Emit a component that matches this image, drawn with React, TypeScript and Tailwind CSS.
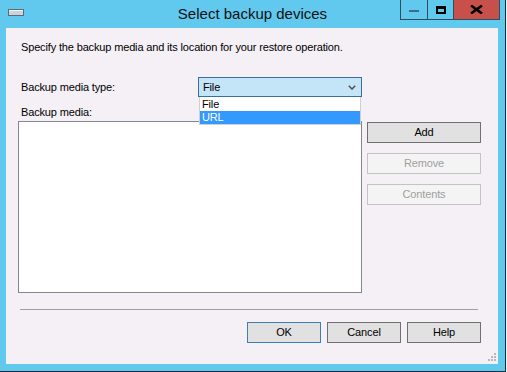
import { type ReactNode } from 'react';

function WinButton({ children, variant = 'normal' }: { children: ReactNode; variant?: 'normal' | 'default' | 'disabled' }) {
  const styles =
    variant === 'disabled'
      ? 'border-[#c3c3c3] bg-[#f4f4f4] text-[#a0a0a0]'
      : variant === 'default'
        ? 'border-[#3c7fb1] bg-[#e1e1e1] text-black'
        : 'border-[#707070] bg-[#e1e1e1] text-black';
  return <div className={`flex h-[21px] items-center justify-center border text-[11px] leading-[13px] ${styles}`}>{children}</div>;
}

function TitleBar() {
  return (
    <div className="grid h-[28px] grid-cols-[1fr_auto_1fr]">
      <div className="pl-[8px] pt-[9px]">
        <svg width="16" height="7" viewBox="0 0 16 7" aria-hidden="true">
          <rect x="0.5" y="0.5" width="15" height="6" fill="#c9d3dd" stroke="#5a6b7c" />
          <rect x="1" y="1" width="14" height="1" fill="#f4f6f8" />
          <rect x="2" y="3" width="1" height="1" fill="#f2e6a0" />
          <rect x="4" y="3" width="1" height="1" fill="#f2e6a0" />
        </svg>
      </div>
      <div className="pt-[5px] text-[15px] leading-[18px] text-[#111]">Select backup devices</div>
      <div className="flex justify-end pr-[5px]">
        <div className="flex h-[20px] w-[100px] border-x border-b border-[#2f4d5c]">
          <div className="flex w-[26px] items-center justify-center">
            <div className="mt-[3px] h-[2px] w-[10px] bg-[#3b6f86]" />
          </div>
          <div className="flex w-[26px] items-center justify-center border-l border-[#2f4d5c]">
            <div className="h-[8px] w-[10px] border-2 border-t-[3px] border-black" />
          </div>
          <div className="flex flex-1 items-center justify-center border-l border-[#2f4d5c] bg-[#c7504b]">
            <svg width="13" height="9" viewBox="0 0 13 9" aria-hidden="true">
              <path d="M1 0.5 L12 8.5 M12 0.5 L1 8.5" stroke="#000" strokeWidth="2.6" />
            </svg>
          </div>
        </div>
      </div>
    </div>
  );
}

function ComboBox() {
  return (
    <div className="relative h-[20px] w-[164px]">
      <div className="flex h-full items-center justify-between border border-[#3c6f9a] bg-[#c4e5f7] pl-[4px] pr-[5px] text-[11px] leading-[13px] text-black">
        <span>File</span>
        <svg width="8" height="5" viewBox="0 0 8 5" aria-hidden="true">
          <path d="M0.8 0.8 L4 4 L7.2 0.8" fill="none" stroke="#555" strokeWidth="1.6" />
        </svg>
      </div>
      <div className="absolute left-[1px] top-[20px] w-[162px] border-x border-b border-[#d0d0d0] bg-white text-[11px] leading-[13px]">
        <div className="h-[14px] pl-[2px] pt-[1px] text-black">File</div>
        <div className="h-[13px] bg-[#3399ff] pl-[2px] text-white">URL</div>
      </div>
    </div>
  );
}

export default function App() {
  return (
    <div className="h-[372px] w-[507px] bg-[#eef2f5] font-['Liberation_Sans',Arial,sans-serif]">
      <div className="flex h-[372px] w-[506px] flex-col border-b border-r border-[#1c2b34] bg-[#61c8ee]">
        <TitleBar />
        <div className="relative ml-[6px] mr-[7px] h-[336px] bg-[#f5f0f5] text-[11px] leading-[13px] tracking-[-0.15px] text-black">
          <p className="pl-[15px] pt-[13px]">Specify the backup media and its location for your restore operation.</p>
          <div className="relative z-10 mt-[23px] flex items-center pl-[15px]">
            <span className="w-[177px]">Backup media type:</span>
            <ComboBox />
          </div>
          <p className="mt-[9px] pl-[15px]">Backup media:</p>
          <div className="mt-[2px] flex items-start pl-[12px]">
            <div className="h-[172px] w-[344px] border border-[#828790] bg-white" />
            <div className="ml-[5px] mt-[1px] flex w-[114px] flex-col gap-[10px]">
              <WinButton>Add</WinButton>
              <WinButton variant="disabled">Remove</WinButton>
              <WinButton variant="disabled">Contents</WinButton>
            </div>
          </div>
          <div className="ml-[14px] mt-[16px] h-px w-[458px] bg-[#a0a0a0]" />
          <div className="mt-[12px] flex justify-end gap-[6px] pr-[17px]">
            <div className="w-[74px]"><WinButton variant="default">OK</WinButton></div>
            <div className="w-[74px]"><WinButton>Cancel</WinButton></div>
            <div className="w-[74px]"><WinButton>Help</WinButton></div>
          </div>
          <svg className="absolute bottom-[2px] right-[1px]" width="10" height="10" viewBox="0 0 10 10" aria-hidden="true">
            <rect x="7" y="1" width="2" height="2" fill="#b8b8b8" />
            <rect x="7" y="4" width="2" height="2" fill="#b8b8b8" />
            <rect x="4" y="4" width="2" height="2" fill="#b8b8b8" />
            <rect x="7" y="7" width="2" height="2" fill="#b8b8b8" />
            <rect x="4" y="7" width="2" height="2" fill="#b8b8b8" />
            <rect x="1" y="7" width="2" height="2" fill="#b8b8b8" />
          </svg>
        </div>
      </div>
    </div>
  );
}
